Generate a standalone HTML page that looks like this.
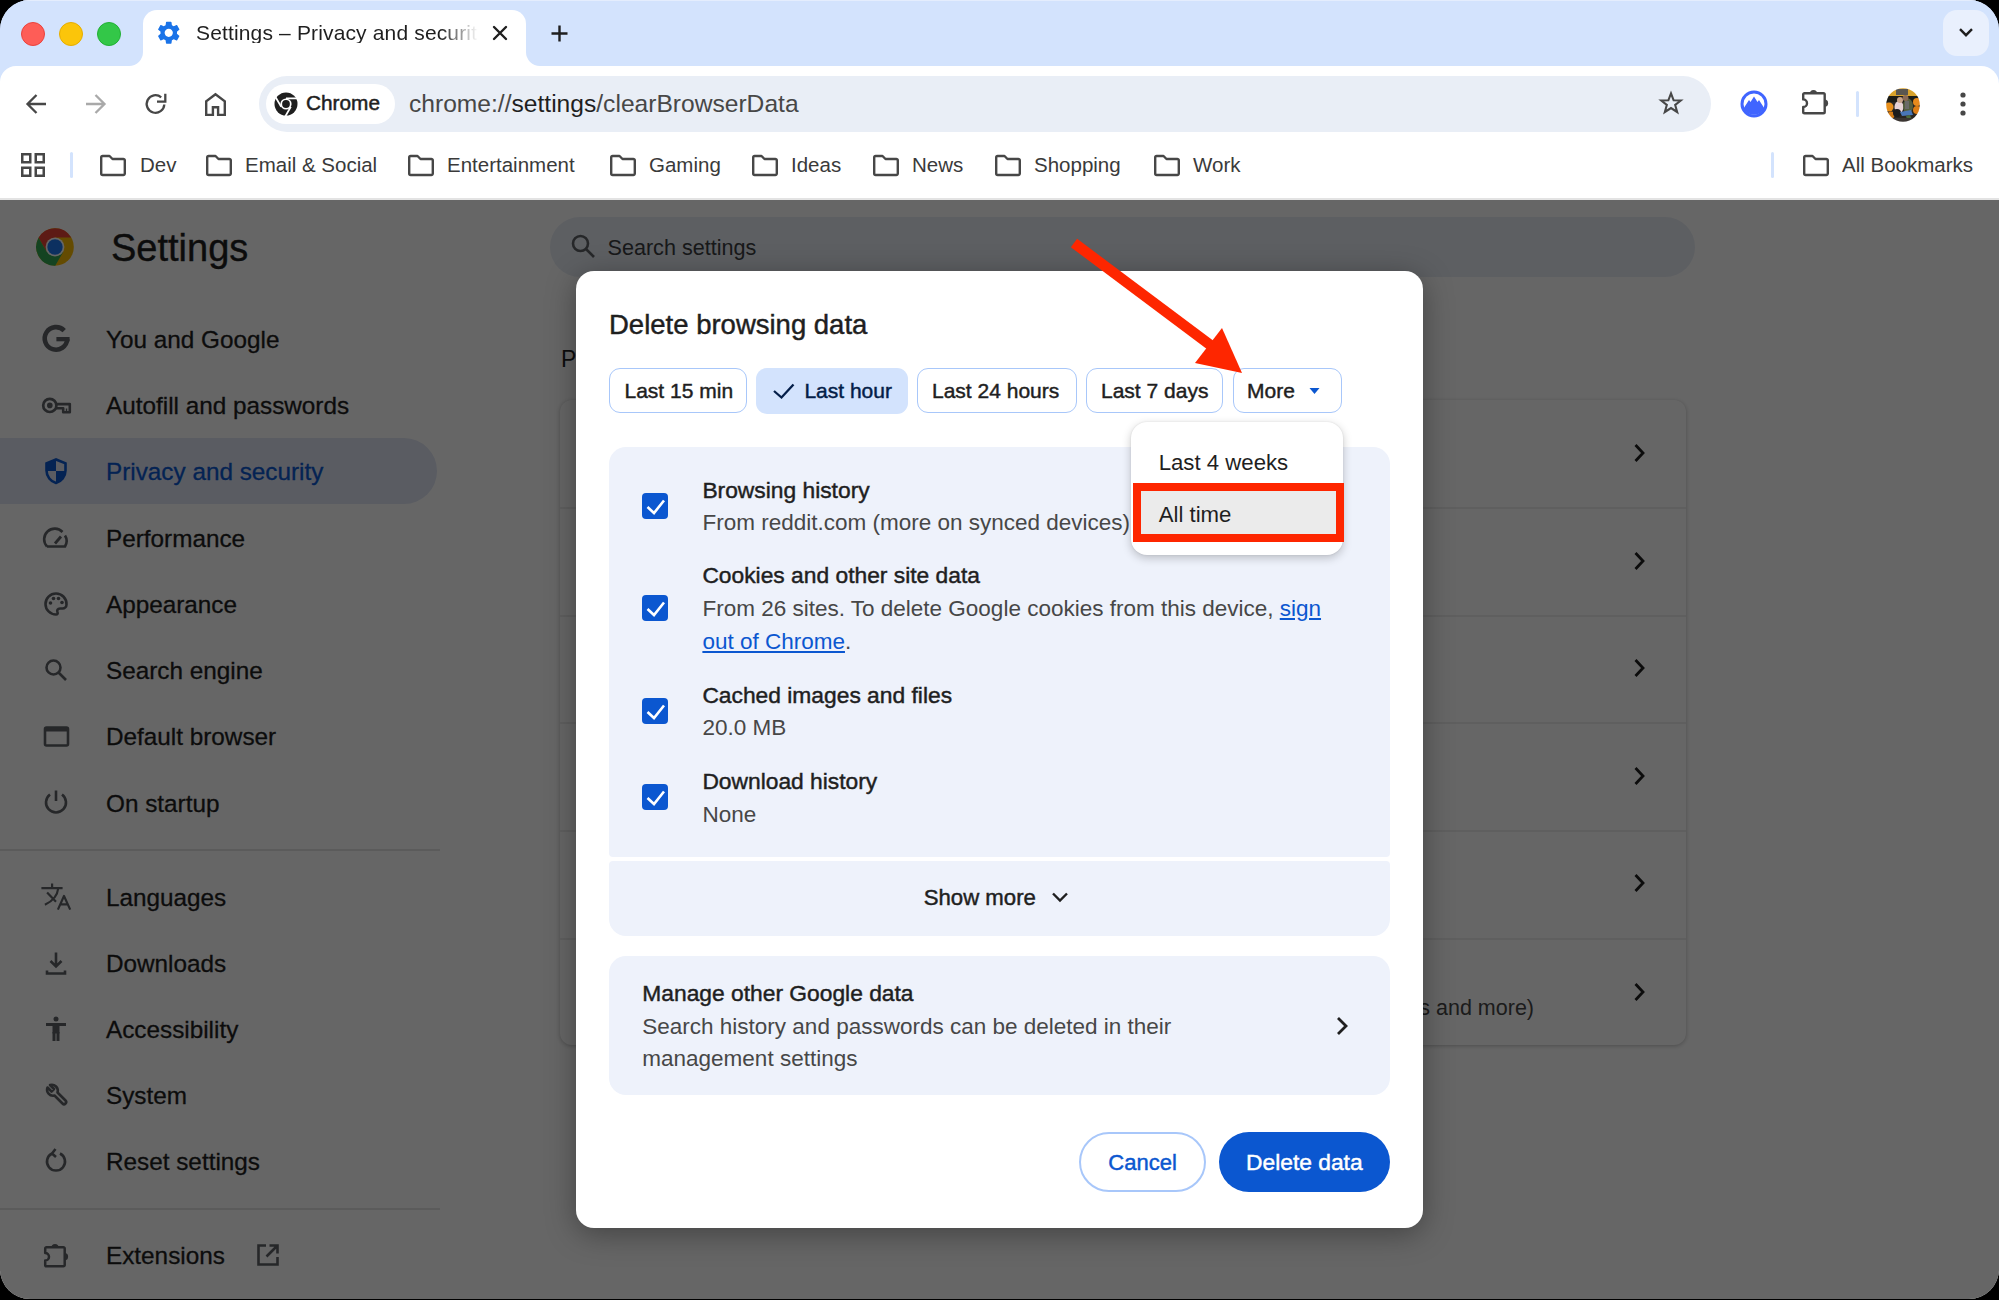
<!DOCTYPE html>
<html><head><meta charset="utf-8">
<style>
*{margin:0;padding:0;box-sizing:border-box}
html,body{width:1999px;height:1300px;overflow:hidden;background:#000}
body{font-family:"Liberation Sans",sans-serif;color:#1f1f1f}
#win{position:absolute;left:0;top:0;width:1999px;height:1299px;border-radius:30px;overflow:hidden;background:linear-gradient(#d3e3fd 0,#d3e3fd 66px,#fff 66px,#fff 200px,#666 200px)}
.a{position:absolute}
.t{position:absolute;white-space:nowrap;line-height:1}
svg{position:absolute;overflow:visible}
/* frame */
#strip{left:0;top:0;width:1999px;height:66px;background:#d3e3fd;border-top:1px solid #e4edfd}
.light{border-radius:50%;width:24px;height:24px}
#tab{left:143px;top:10px;width:383px;height:60px;background:#fff;border-radius:14px 14px 0 0}
#toolbar{left:0;top:66px;width:1999px;height:134px;background:#fff}
#omni{left:259px;top:76px;width:1452px;height:56px;border-radius:28px;background:#e9eef6}
#chip{left:266px;top:84px;width:129px;height:40px;border-radius:20px;background:#fff}
#bmline{left:0;top:198px;width:1999px;height:2px;background:#e3e3e3}
.sep{background:#d3e3fd;width:3px;border-radius:2px}
/* page */
#page{left:0;top:200px;width:1999px;height:1100px;background:#fff}
#overlay{left:0;top:200px;width:1999px;height:1100px;background:rgba(0,0,0,0.6)}
/* dialog */
#dlg{left:576px;top:271px;width:847px;height:957px;background:#fff;border-radius:18px;box-shadow:0 6px 30px rgba(0,0,0,0.35)}
.chipb{position:absolute;top:368px;height:45px;border:1.6px solid #a8c7fa;border-radius:11px;background:#fff}
.panel{position:absolute;left:609px;width:781px;background:#eef2fb}
.cb{position:absolute;left:642px;width:26px;height:26px;border-radius:4px;background:#0b57d0}
.tt{font-size:21.5px;color:#1f1f1f;-webkit-text-stroke:0.25px #1f1f1f}
.st{font-size:22px;color:#474747}
</style></head><body>
<div id="win">
  <div class="a" id="strip"></div>
  <div class="a light" style="left:21px;top:21.8px;background:#fe5d57;border:1px solid #e9423c"></div>
  <div class="a light" style="left:59px;top:21.8px;background:#fbc50a;border:1px solid #e5ad00"></div>
  <div class="a light" style="left:97px;top:21.8px;background:#33c748;border:1px solid #22b034"></div>

  <!-- active tab -->
  <div class="a" id="tab"></div>
  <div class="a" style="left:129px;top:52px;width:14px;height:14px;background:#fff"></div>
  <div class="a" style="left:129px;top:52px;width:14px;height:14px;background:#d3e3fd;border-bottom-right-radius:14px"></div>
  <div class="a" style="left:526px;top:52px;width:14px;height:14px;background:#fff"></div>
  <div class="a" style="left:526px;top:52px;width:14px;height:14px;background:#d3e3fd;border-bottom-left-radius:14px"></div>
  <!-- tab content placeholder -->
  <div id="tabc">
  <svg style="left:155px;top:19.3px" width="27.5" height="27.5" viewBox="0 0 24 24"><path fill="#1a73e8" d="M19.14 12.94c.04-.3.06-.61.06-.94 0-.32-.02-.64-.07-.94l2.03-1.58c.18-.14.23-.41.12-.61l-1.92-3.32c-.12-.22-.37-.29-.59-.22l-2.39.96c-.5-.38-1.030-.7-1.62-.94l-.36-2.54c-.04-.24-.24-.41-.48-.41h-3.84c-.24 0-.43.17-.47.41l-.36 2.54c-.59.24-1.13.57-1.62.94l-2.390-.96c-.22-.08-.47 0-.59.22L2.74 8.87c-.12.21-.08.47.12.61l2.03 1.58c-.05.3-.09.63-.09.94s.02.64.07.94l-2.03 1.58c-.18.14-.23.41-.12.61l1.92 3.32c.12.22.37.29.59.22l2.39-.96c.5.38 1.03.7 1.62.94l.36 2.54c.05.24.24.41.48.41h3.84c.24 0 .44-.17.47-.41l.36-2.54c.59-.24 1.13-.56 1.62-.94l2.39.96c.22.08.47 0 .59-.22l1.92-3.32c.12-.22.07-.47-.12-.61l-2.01-1.58zM12 15.6c-1.98 0-3.6-1.62-3.6-3.6s1.62-3.6 3.6-3.6 3.6 1.62 3.6 3.6-1.62 3.6-3.6 3.6z"/></svg>
  <div class="t" style="left:196px;top:22px;font-size:21px;letter-spacing:0.15px;color:#1f1f1f;width:285px;overflow:hidden;-webkit-mask-image:linear-gradient(90deg,#000 245px,transparent 282px)">Settings – Privacy and security</div>
  <svg style="left:493px;top:26px" width="14" height="14" viewBox="0 0 14 14"><path d="M1 1L13 13M13 1L1 13" stroke="#1f1f1f" stroke-width="2.4" stroke-linecap="round"/></svg>
  <svg style="left:551px;top:25px" width="17" height="17" viewBox="0 0 17 17"><path d="M8.5 0.5V16.5M0.5 8.5H16.5" stroke="#1f1f1f" stroke-width="2.4"/></svg>
  <div class="a" style="left:1943px;top:10px;width:46px;height:46px;border-radius:14px;background:#e9f0fd"></div>
  <svg style="left:1959px;top:28px" width="14" height="9" viewBox="0 0 14 9"><path d="M1 1.2L7 7.2L13 1.2" fill="none" stroke="#1f1f1f" stroke-width="2.4"/></svg>
</div>

  <div class="a" id="toolbar"></div>
  <div class="a" style="left:0px;top:66px;width:16px;height:16px;background:#d3e3fd"></div>
  <div class="a" style="left:0px;top:66px;width:16px;height:16px;background:#fff;border-top-left-radius:16px"></div>
  <div class="a" style="left:1975px;top:66px;width:24px;height:24px;background:#d3e3fd"></div>
  <div class="a" style="left:1975px;top:66px;width:24px;height:24px;background:#fff;border-top-right-radius:18px"></div>
  <div class="a" id="omni"></div>
  <div class="a" id="chip"></div>
  <div class="a" id="bmline"></div>

  <div id="toolc">
  <svg style="left:26px;top:94px" width="21" height="21" viewBox="0 0 21 21"><path d="M10.5 1L1.5 10L10.5 19M1.5 10H20" fill="none" stroke="#474747" stroke-width="2.3"/></svg>
  <svg style="left:85px;top:94px" width="21" height="21" viewBox="0 0 21 21"><path d="M10.5 1L19.5 10L10.5 19M19.5 10H1" fill="none" stroke="#a9a9a9" stroke-width="2.3"/></svg>
  <svg style="left:145px;top:93px" width="22" height="22" viewBox="0 0 22 22"><path d="M16.2 4.3A8.8 8.8 0 1 0 19.3 11.5" fill="none" stroke="#474747" stroke-width="2.3"/><path d="M12 8.6H20.3V0.8" fill="none" stroke="#474747" stroke-width="2.3"/></svg>
  <svg style="left:204px;top:92px" width="23" height="25" viewBox="0 0 23 25"><path d="M11.5 2.2L2.2 9.3V22.9H8.9V15.2H14.1V22.9H20.8V9.3Z" fill="none" stroke="#474747" stroke-width="2.4"/></svg>
  <svg style="left:274px;top:92px" width="24" height="24" viewBox="0 0 24 24"><circle cx="12" cy="12" r="11.5" fill="#1f1f1f"/><circle cx="12" cy="12" r="5.6" fill="#fff"/><circle cx="12" cy="12" r="3.9" fill="#1f1f1f"/><path d="M12 6.4H23M7.15 14.8L1.65 5.3M16.85 14.8L11.35 24.3" stroke="#fff" stroke-width="1.7"/></svg>
  <div class="t" style="left:306px;top:93px;font-size:20.8px;color:#1f1f1f;-webkit-text-stroke:0.5px #1f1f1f">Chrome</div>
  <div class="t" style="left:409px;top:91.5px;font-size:24.6px;color:#474747">chrome://<span style="color:#1f1f1f">settings</span>/clearBrowserData</div>
  <svg style="left:1658px;top:90.3px" width="26" height="26" viewBox="-1.3 -1.3 28.6 28.6"><path d="M13 2.5L15.9 10L23.8 10.3L17.6 15.2L19.8 22.9L13 18.5L6.2 22.9L8.4 15.2L2.2 10.3L10.1 10Z" fill="none" stroke="#474747" stroke-width="2.3" stroke-linejoin="miter"/></svg>
  <svg style="left:1740px;top:90px" width="28" height="28" viewBox="0 0 28 28"><circle cx="14" cy="14" r="12" fill="none" stroke="#4065ff" stroke-width="3"/><path d="M3.5 18.5L9 10L10.5 12L14 6.5L17.5 12L19 10L24.5 18.5A12 12 0 0 1 3.5 18.5Z" fill="#4065ff"/></svg>
  <svg style="left:1800px;top:87px" width="30" height="29" viewBox="0 0 30 29"><path d="M3.2 7.5A1.3 1.3 0 0 1 4.5 6.2H23.4A1.3 1.3 0 0 1 24.7 7.5V25A1.3 1.3 0 0 1 23.4 26.3H4.5A1.3 1.3 0 0 1 3.2 25V20A3.8 3.8 0 0 0 3.2 12.4Z" fill="none" stroke="#474747" stroke-width="2.4" stroke-linejoin="round"/><path d="M9.9 6.5A3.6 3.6 0 0 1 17.1 6.5Z" fill="#474747"/><path d="M24.5 12.6A3.6 3.6 0 0 1 24.5 19.8Z" fill="#474747"/></svg>
  <div class="a sep" style="left:1856px;top:91px;height:26px"></div>
  <svg style="left:1886px;top:87.5px" width="34" height="34" viewBox="0 0 34 34"><defs><clipPath id="av"><circle cx="17" cy="17" r="16.8"/></clipPath><filter id="avb" x="-10%" y="-10%" width="120%" height="120%"><feGaussianBlur stdDeviation="0.7"/></filter></defs><g clip-path="url(#av)"><g filter="url(#avb)"><rect width="34" height="34" fill="#2a2622"/><rect x="0" y="0" width="34" height="8" fill="#d9a22a"/><rect x="10" y="1" width="12" height="6" fill="#5a5650"/><rect x="0" y="8" width="34" height="6" fill="#1c1a18"/><circle cx="3" cy="19" r="4.5" fill="#e8901e"/><circle cx="5" cy="27" r="3.5" fill="#d07a18"/><circle cx="31" cy="14" r="4" fill="#e88a1a"/><circle cx="31" cy="22" r="4" fill="#dd7e16"/><ellipse cx="13" cy="19" rx="4.5" ry="6" fill="#e6d2d6"/><ellipse cx="11" cy="25" rx="4" ry="4" fill="#1a1a1e"/><circle cx="14" cy="12" r="3" fill="#c9a48a"/><ellipse cx="22" cy="18" rx="5" ry="7.5" fill="#56603f"/><rect x="19" y="13" width="4" height="8" fill="#6a6a68"/><circle cx="19.5" cy="10" r="3" fill="#8a6a55"/><path d="M14 24L25 22L27 27L16 28Z" fill="#4a76b8"/><path d="M20 28L24 27L27 34L22 34Z" fill="#4d6a3a"/><rect x="0" y="30" width="34" height="4" fill="#3a3630"/></g></g></svg>
  <svg style="left:1958px;top:90px" width="10" height="28" viewBox="0 0 10 28"><circle cx="5" cy="5" r="2.6" fill="#474747"/><circle cx="5" cy="14" r="2.6" fill="#474747"/><circle cx="5" cy="23" r="2.6" fill="#474747"/></svg>
</div>
  <div id="bmc">
  <svg style="left:21px;top:153px" width="25" height="25" viewBox="0 0 25 25"><g fill="none" stroke="#474747" stroke-width="2.5"><rect x="1.25" y="1.25" width="8" height="8"/><rect x="14.75" y="1.25" width="8" height="8"/><rect x="1.25" y="14.75" width="8" height="8"/><rect x="14.75" y="14.75" width="8" height="8"/></g></svg>
  <div class="a sep" style="left:70px;top:152px;height:26px"></div>
  <div class="a sep" style="left:1771px;top:152px;height:26px"></div>
  <svg style="left:99px;top:154px" width="28" height="23" viewBox="0 0 28 23"><path d="M2.2 3.5A1.5 1.5 0 0 1 3.7 2H10.5L13.5 5H24.3A1.5 1.5 0 0 1 25.8 6.5V19.5A1.5 1.5 0 0 1 24.3 21H3.7A1.5 1.5 0 0 1 2.2 19.5Z" fill="none" stroke="#474747" stroke-width="2.4" stroke-linejoin="round"/></svg>
  <div class="t" style="left:140px;top:154.5px;font-size:20.5px;color:#3a3a3a">Dev</div>
  <svg style="left:205px;top:154px" width="28" height="23" viewBox="0 0 28 23"><path d="M2.2 3.5A1.5 1.5 0 0 1 3.7 2H10.5L13.5 5H24.3A1.5 1.5 0 0 1 25.8 6.5V19.5A1.5 1.5 0 0 1 24.3 21H3.7A1.5 1.5 0 0 1 2.2 19.5Z" fill="none" stroke="#474747" stroke-width="2.4" stroke-linejoin="round"/></svg>
  <div class="t" style="left:245px;top:154.5px;font-size:20.5px;color:#3a3a3a">Email &amp; Social</div>
  <svg style="left:407px;top:154px" width="28" height="23" viewBox="0 0 28 23"><path d="M2.2 3.5A1.5 1.5 0 0 1 3.7 2H10.5L13.5 5H24.3A1.5 1.5 0 0 1 25.8 6.5V19.5A1.5 1.5 0 0 1 24.3 21H3.7A1.5 1.5 0 0 1 2.2 19.5Z" fill="none" stroke="#474747" stroke-width="2.4" stroke-linejoin="round"/></svg>
  <div class="t" style="left:447px;top:154.5px;font-size:20.5px;color:#3a3a3a">Entertainment</div>
  <svg style="left:609px;top:154px" width="28" height="23" viewBox="0 0 28 23"><path d="M2.2 3.5A1.5 1.5 0 0 1 3.7 2H10.5L13.5 5H24.3A1.5 1.5 0 0 1 25.8 6.5V19.5A1.5 1.5 0 0 1 24.3 21H3.7A1.5 1.5 0 0 1 2.2 19.5Z" fill="none" stroke="#474747" stroke-width="2.4" stroke-linejoin="round"/></svg>
  <div class="t" style="left:649px;top:154.5px;font-size:20.5px;color:#3a3a3a">Gaming</div>
  <svg style="left:751px;top:154px" width="28" height="23" viewBox="0 0 28 23"><path d="M2.2 3.5A1.5 1.5 0 0 1 3.7 2H10.5L13.5 5H24.3A1.5 1.5 0 0 1 25.8 6.5V19.5A1.5 1.5 0 0 1 24.3 21H3.7A1.5 1.5 0 0 1 2.2 19.5Z" fill="none" stroke="#474747" stroke-width="2.4" stroke-linejoin="round"/></svg>
  <div class="t" style="left:791px;top:154.5px;font-size:20.5px;color:#3a3a3a">Ideas</div>
  <svg style="left:872px;top:154px" width="28" height="23" viewBox="0 0 28 23"><path d="M2.2 3.5A1.5 1.5 0 0 1 3.7 2H10.5L13.5 5H24.3A1.5 1.5 0 0 1 25.8 6.5V19.5A1.5 1.5 0 0 1 24.3 21H3.7A1.5 1.5 0 0 1 2.2 19.5Z" fill="none" stroke="#474747" stroke-width="2.4" stroke-linejoin="round"/></svg>
  <div class="t" style="left:912px;top:154.5px;font-size:20.5px;color:#3a3a3a">News</div>
  <svg style="left:994px;top:154px" width="28" height="23" viewBox="0 0 28 23"><path d="M2.2 3.5A1.5 1.5 0 0 1 3.7 2H10.5L13.5 5H24.3A1.5 1.5 0 0 1 25.8 6.5V19.5A1.5 1.5 0 0 1 24.3 21H3.7A1.5 1.5 0 0 1 2.2 19.5Z" fill="none" stroke="#474747" stroke-width="2.4" stroke-linejoin="round"/></svg>
  <div class="t" style="left:1034px;top:154.5px;font-size:20.5px;color:#3a3a3a">Shopping</div>
  <svg style="left:1153px;top:154px" width="28" height="23" viewBox="0 0 28 23"><path d="M2.2 3.5A1.5 1.5 0 0 1 3.7 2H10.5L13.5 5H24.3A1.5 1.5 0 0 1 25.8 6.5V19.5A1.5 1.5 0 0 1 24.3 21H3.7A1.5 1.5 0 0 1 2.2 19.5Z" fill="none" stroke="#474747" stroke-width="2.4" stroke-linejoin="round"/></svg>
  <div class="t" style="left:1193px;top:154.5px;font-size:20.5px;color:#3a3a3a">Work</div>
  <svg style="left:1802px;top:154px" width="28" height="23" viewBox="0 0 28 23"><path d="M2.2 3.5A1.5 1.5 0 0 1 3.7 2H10.5L13.5 5H24.3A1.5 1.5 0 0 1 25.8 6.5V19.5A1.5 1.5 0 0 1 24.3 21H3.7A1.5 1.5 0 0 1 2.2 19.5Z" fill="none" stroke="#474747" stroke-width="2.4" stroke-linejoin="round"/></svg>
  <div class="t" style="left:1842px;top:154.5px;font-size:20.5px;color:#3a3a3a">All Bookmarks</div>
</div>

  <div class="a" id="page"></div>
  <div id="pagec">
  <svg style="left:35.6px;top:227.8px" width="38" height="38" viewBox="0 0 38 38"><circle cx="19" cy="19" r="18.8" fill="#fbbc04"/><path d="M19 19L19 9.4L35.2 9.4A18.8 18.8 0 0 0 2.59 9.77L10.69 23.8Z" fill="#e94235"/><path d="M10.69 23.8L2.59 9.77A18.8 18.8 0 0 0 19.21 37.83L27.31 23.8L19 19Z" fill="#34a853"/><circle cx="19" cy="19" r="9.4" fill="#fff"/><circle cx="19" cy="19" r="7.7" fill="#1f78f0"/></svg>
  <div class="t" style="left:111px;top:228.5px;font-size:38px;color:#1f1f1f;-webkit-text-stroke:0.4px #1f1f1f">Settings</div>
  <div class="a" style="left:550px;top:216.5px;width:1145px;height:60px;border-radius:30px;background:#e9eef6"></div>
  <svg style="left:569px;top:232px" width="28" height="28" viewBox="0 0 28 28"><circle cx="11.5" cy="11.5" r="7.5" fill="none" stroke="#5f6368" stroke-width="2.6"/><path d="M17 17L25 25" stroke="#5f6368" stroke-width="2.6"/></svg>
  <div class="t" style="left:607.5px;top:236.5px;font-size:21.6px;color:#3c3f43">Search settings</div>
  <div class="a" style="left:0;top:438px;width:437px;height:66px;border-radius:0 33px 33px 0;background:#e0e6f5"></div>
  <div class="a" style="left:0;top:849px;width:440px;height:2px;background:#e3e3e3"></div>
  <div class="a" style="left:0;top:1208px;width:440px;height:2px;background:#e3e3e3"></div>
  <svg style="left:42px;top:325px" width="28" height="28" viewBox="0 0 28 28"><path d="M22.2 5.6A11.3 11.3 0 1 0 25.3 14.2" fill="none" stroke="#5f6368" stroke-width="4.6"/><rect x="14.4" y="12" width="13.2" height="4.3" fill="#5f6368"/></svg>
  <div class="t" style="left:106px;top:327.8px;font-size:24.3px;color:#1f1f1f;-webkit-text-stroke:0.3px #1f1f1f">You and Google</div>
  <svg style="left:42px;top:391px" width="28" height="28" viewBox="0 0 28 28"><circle cx="7.8" cy="14.4" r="6.6" fill="none" stroke="#5f6368" stroke-width="2.7"/><circle cx="7.8" cy="14.4" r="2.8" fill="#5f6368"/><path d="M14.2 13.1H27.8V21.2H21.2V17.3H14.4" fill="none" stroke="#5f6368" stroke-width="2.6" stroke-linejoin="round"/><path d="M24.5 17.5V21" stroke="#5f6368" stroke-width="1.4"/></svg>
  <div class="t" style="left:106px;top:394.0px;font-size:24.3px;color:#1f1f1f;-webkit-text-stroke:0.3px #1f1f1f">Autofill and passwords</div>
  <svg style="left:42px;top:457px" width="28" height="28" viewBox="0 0 28 28"><path d="M14 2.5L4.5 6.3V13.5C4.5 19.5 8.7 24.6 14 26C19.3 24.6 23.5 19.5 23.5 13.5V6.3Z" fill="none" stroke="#0b57d0" stroke-width="2.6"/><path d="M14 2.5V14H4.5V6.3ZM14 14H23.5C23.5 19.5 19.3 24.6 14 26Z" fill="#0b57d0"/></svg>
  <div class="t" style="left:106px;top:460.3px;font-size:24.3px;color:#0b57d0;-webkit-text-stroke:0.3px #0b57d0">Privacy and security</div>
  <svg style="left:42px;top:524px" width="28" height="28" viewBox="0 0 28 28"><path d="M5 22.5A10.5 10.5 0 0 1 20.5 8M23 11.5A10.5 10.5 0 0 1 23 22.5H5" fill="none" stroke="#5f6368" stroke-width="2.6"/><path d="M13 19.5L19 12.5" stroke="#5f6368" stroke-width="2.8"/></svg>
  <div class="t" style="left:106px;top:526.5px;font-size:24.3px;color:#1f1f1f;-webkit-text-stroke:0.3px #1f1f1f">Performance</div>
  <svg style="left:42px;top:590px" width="28" height="28" viewBox="0 0 28 28"><path d="M14 3.5A10.5 10.5 0 0 0 14 24.5C15.5 24.5 16 23.5 15.5 22.3C14.8 20.5 15.5 18.5 18 18.5H20.5A4 4 0 0 0 24.5 14.5A10.5 10.5 0 0 0 14 3.5Z" fill="none" stroke="#5f6368" stroke-width="2.6"/><circle cx="8.5" cy="13" r="1.8" fill="#5f6368"/><circle cx="11.5" cy="8.5" r="1.8" fill="#5f6368"/><circle cx="16.5" cy="8.5" r="1.8" fill="#5f6368"/><circle cx="20" cy="12.5" r="1.8" fill="#5f6368"/></svg>
  <div class="t" style="left:106px;top:592.8px;font-size:24.3px;color:#1f1f1f;-webkit-text-stroke:0.3px #1f1f1f">Appearance</div>
  <svg style="left:42px;top:656px" width="28" height="28" viewBox="0 0 28 28"><circle cx="11.5" cy="11.5" r="7" fill="none" stroke="#5f6368" stroke-width="2.6"/><path d="M16.5 16.5L24 24" fill="none" stroke="#5f6368" stroke-width="2.6"/></svg>
  <div class="t" style="left:106px;top:659.0px;font-size:24.3px;color:#1f1f1f;-webkit-text-stroke:0.3px #1f1f1f">Search engine</div>
  <svg style="left:42px;top:722px" width="28" height="28" viewBox="0 0 28 28"><rect x="3" y="5.5" width="23" height="18" rx="1.5" fill="none" stroke="#5f6368" stroke-width="2.6"/><rect x="3" y="5.5" width="23" height="4" fill="#5f6368"/></svg>
  <div class="t" style="left:106px;top:725.3px;font-size:24.3px;color:#1f1f1f;-webkit-text-stroke:0.3px #1f1f1f">Default browser</div>
  <svg style="left:42px;top:788px" width="28" height="28" viewBox="0 0 28 28"><path d="M14 2.5V13" fill="none" stroke="#5f6368" stroke-width="2.6"/><path d="M8 6.5A10 10 0 1 0 20 6.5" fill="none" stroke="#5f6368" stroke-width="2.6"/></svg>
  <div class="t" style="left:106px;top:791.5px;font-size:24.3px;color:#1f1f1f;-webkit-text-stroke:0.3px #1f1f1f">On startup</div>
  <svg style="left:42px;top:883px" width="28" height="28" viewBox="0 0 28 28"><path d="M-0.6 5.1H20.6M10.1 0.5V5.1M16.2 5.5C15.5 12 11 18 2.9 21.7M5.1 9.4L14 18.8" fill="none" stroke="#5f6368" stroke-width="2.2"/><path d="M15.9 26.6L22 13L28.2 26.6M18 21.3H26" fill="none" stroke="#5f6368" stroke-width="2.2" stroke-linejoin="round"/></svg>
  <div class="t" style="left:106px;top:885.6px;font-size:24.3px;color:#1f1f1f;-webkit-text-stroke:0.3px #1f1f1f">Languages</div>
  <svg style="left:42px;top:949px" width="28" height="28" viewBox="0 0 28 28"><path d="M14 3.5V17M8.5 12L14 17.5L19.5 12M5 21.5V24.5H23V21.5" fill="none" stroke="#5f6368" stroke-width="2.6"/></svg>
  <div class="t" style="left:106px;top:951.7px;font-size:24.3px;color:#1f1f1f;-webkit-text-stroke:0.3px #1f1f1f">Downloads</div>
  <svg style="left:42px;top:1015px" width="28" height="28" viewBox="0 0 28 28"><circle cx="14" cy="4" r="2.5" fill="#5f6368"/><path d="M4 9.5H24" stroke="#5f6368" stroke-width="3"/><rect x="10.5" y="9.5" width="7" height="9" fill="#5f6368"/><path d="M12 17V26M16 17V26" stroke="#5f6368" stroke-width="3"/></svg>
  <div class="t" style="left:106px;top:1018.0px;font-size:24.3px;color:#1f1f1f;-webkit-text-stroke:0.3px #1f1f1f">Accessibility</div>
  <svg style="left:42px;top:1081px" width="28" height="28" viewBox="0 0 28 28"><path d="M5.5 6.5L9.5 10.5L12 8L8 4A6 6 0 0 1 15.5 11.5L23.5 19.5A2 2 0 0 1 20.5 22.5L12.5 14.5A6 6 0 0 1 5.5 6.5Z" fill="none" stroke="#5f6368" stroke-width="2.6" stroke-linejoin="round"/></svg>
  <div class="t" style="left:106px;top:1084.0px;font-size:24.3px;color:#1f1f1f;-webkit-text-stroke:0.3px #1f1f1f">System</div>
  <svg style="left:42px;top:1147px" width="28" height="28" viewBox="0 0 28 28"><path d="M10 6.5A9 9 0 1 0 18 6.5" fill="none" stroke="#5f6368" stroke-width="2.6"/><path d="M13.5 2L10 6.5L14 10" fill="none" stroke="#5f6368" stroke-width="2.6"/></svg>
  <div class="t" style="left:106px;top:1150.3px;font-size:24.3px;color:#1f1f1f;-webkit-text-stroke:0.3px #1f1f1f">Reset settings</div>
  <svg style="left:42px;top:1241px" width="28" height="28" viewBox="0 0 28 28"><path d="M3.2 7.5A1.3 1.3 0 0 1 4.5 6.2H21.4A1.3 1.3 0 0 1 22.7 7.5V24A1.3 1.3 0 0 1 21.4 25.3H4.5A1.3 1.3 0 0 1 3.2 24V19.5A3.8 3.8 0 0 0 3.2 11.9Z" fill="none" stroke="#5f6368" stroke-width="2.5" stroke-linejoin="round"/><path d="M9.4 6.5A3.6 3.6 0 0 1 16.6 6.5Z" fill="#5f6368"/><path d="M22.5 12.1A3.6 3.6 0 0 1 22.5 19.3Z" fill="#5f6368"/></svg>
  <div class="t" style="left:106px;top:1244.0px;font-size:24.3px;color:#1f1f1f;-webkit-text-stroke:0.3px #1f1f1f">Extensions</div>
  <svg style="left:255px;top:1242px" width="26" height="26" viewBox="0 0 26 26"><path d="M11 3.5H3.5V22.5H22.5V15M14.5 3.5H22.5V11.5M22.5 3.5L11.5 14.5" fill="none" stroke="#5f6368" stroke-width="2.6"/></svg>
  <div class="t" style="left:561px;top:347.5px;font-size:23px;color:#1f1f1f">Privacy and security</div>
  <div class="a" style="left:560px;top:400px;width:1126px;height:645px;border-radius:12px;background:#fff;box-shadow:0 1px 4px rgba(0,0,0,0.25)"></div>
  <div class="a" style="left:560px;top:507px;width:1126px;height:1.5px;background:#ededed"></div>
  <div class="a" style="left:560px;top:615px;width:1126px;height:1.5px;background:#ededed"></div>
  <div class="a" style="left:560px;top:722px;width:1126px;height:1.5px;background:#ededed"></div>
  <div class="a" style="left:560px;top:830px;width:1126px;height:1.5px;background:#ededed"></div>
  <div class="a" style="left:560px;top:938px;width:1126px;height:1.5px;background:#ededed"></div>
  <svg style="left:1632px;top:443px" width="16" height="20" viewBox="0 0 16 20"><path d="M3.5 2L11 10L3.5 18" fill="none" stroke="#1f1f1f" stroke-width="2.8"/></svg>
  <svg style="left:1632px;top:551px" width="16" height="20" viewBox="0 0 16 20"><path d="M3.5 2L11 10L3.5 18" fill="none" stroke="#1f1f1f" stroke-width="2.8"/></svg>
  <svg style="left:1632px;top:658px" width="16" height="20" viewBox="0 0 16 20"><path d="M3.5 2L11 10L3.5 18" fill="none" stroke="#1f1f1f" stroke-width="2.8"/></svg>
  <svg style="left:1632px;top:766px" width="16" height="20" viewBox="0 0 16 20"><path d="M3.5 2L11 10L3.5 18" fill="none" stroke="#1f1f1f" stroke-width="2.8"/></svg>
  <svg style="left:1632px;top:873px" width="16" height="20" viewBox="0 0 16 20"><path d="M3.5 2L11 10L3.5 18" fill="none" stroke="#1f1f1f" stroke-width="2.8"/></svg>
  <svg style="left:1632px;top:982px" width="16" height="20" viewBox="0 0 16 20"><path d="M3.5 2L11 10L3.5 18" fill="none" stroke="#1f1f1f" stroke-width="2.8"/></svg>
  <div class="t" style="left:1200px;top:998px;width:334px;text-align:right;font-size:21.5px;color:#474747">Third-party cookies and more)</div>
</div>
  <div class="a" id="overlay"></div>

  <div class="a" id="dlg"></div>
  <div id="dlgc">
  <div class="t" style="left:609px;top:310.9px;font-size:27.5px;color:#1f1f1f;-webkit-text-stroke:0.45px currentColor;">Delete browsing data</div>
  <div class="chipb" style="left:609px;width:137.5px"></div>
  <div class="t" style="left:624.5px;top:379.8px;font-size:21px;color:#1f1f1f;-webkit-text-stroke:0.45px currentColor;">Last 15 min</div>
  <div class="chipb" style="left:917px;width:159.5px"></div>
  <div class="t" style="left:932px;top:379.8px;font-size:21px;color:#1f1f1f;-webkit-text-stroke:0.45px currentColor;">Last 24 hours</div>
  <div class="chipb" style="left:1086px;width:137px"></div>
  <div class="t" style="left:1101px;top:379.8px;font-size:21px;color:#1f1f1f;-webkit-text-stroke:0.45px currentColor;">Last 7 days</div>
  <div class="chipb" style="left:1232.5px;width:109.5px"></div>
  <div class="t" style="left:1247px;top:379.8px;font-size:21px;color:#1f1f1f;-webkit-text-stroke:0.45px currentColor;">More</div>
  <div class="a" style="left:755.5px;top:367.5px;width:152.5px;height:46px;border-radius:11px;background:#d3e3fd"></div>
  <svg style="left:770px;top:380px" width="26" height="20" viewBox="0 0 26 20"><path d="M4 11L11.5 17.5L23.5 4.5" fill="none" stroke="#041e49" stroke-width="2.3"/></svg>
  <div class="t" style="left:804.4px;top:379.8px;font-size:21px;color:#041e49;-webkit-text-stroke:0.45px currentColor;">Last hour</div>
  <svg style="left:1308px;top:386px" width="13" height="9" viewBox="0 0 13 9"><path d="M1.5 2H11.5L6.5 8Z" fill="#0b57d0"/></svg>
  <div class="panel" style="top:447px;height:410px;border-radius:17px 17px 4px 4px"></div>
  <div class="panel" style="top:861px;height:75px;border-radius:4px 4px 17px 17px"></div>
  <div class="panel" style="top:956px;height:139px;border-radius:17px"></div>
  <div class="cb" style="top:492.9px"></div>
  <svg style="left:642px;top:493px" width="27" height="27" viewBox="0 0 27 27"><path d="M5.5 14L12 20L22 7.5" fill="none" stroke="#fff" stroke-width="2.6"/></svg>
  <div class="cb" style="top:595.4px"></div>
  <svg style="left:642px;top:595px" width="27" height="27" viewBox="0 0 27 27"><path d="M5.5 14L12 20L22 7.5" fill="none" stroke="#fff" stroke-width="2.6"/></svg>
  <div class="cb" style="top:698.2px"></div>
  <svg style="left:642px;top:698px" width="27" height="27" viewBox="0 0 27 27"><path d="M5.5 14L12 20L22 7.5" fill="none" stroke="#fff" stroke-width="2.6"/></svg>
  <div class="cb" style="top:784.4px"></div>
  <svg style="left:642px;top:784px" width="27" height="27" viewBox="0 0 27 27"><path d="M5.5 14L12 20L22 7.5" fill="none" stroke="#fff" stroke-width="2.6"/></svg>
  <div class="t" style="left:702.4px;top:478.7px;font-size:22.8px;color:#1f1f1f;-webkit-text-stroke:0.45px currentColor;">Browsing history</div>
  <div class="t" style="left:702.4px;top:512.0px;font-size:22.5px;color:#474747;">From reddit.com (more on synced devices)</div>
  <div class="t" style="left:702.4px;top:564.3px;font-size:22.8px;color:#1f1f1f;-webkit-text-stroke:0.45px currentColor;">Cookies and other site data</div>
  <div class="t" style="left:702.4px;top:598.0px;font-size:22.5px;color:#474747;">From 26 sites. To delete Google cookies from this device, <span style="color:#0b57d0;text-decoration:underline">sign</span></div>
  <div class="t" style="left:702.4px;top:631.0px;font-size:22.5px;color:#474747;"><span style="color:#0b57d0;text-decoration:underline">out of Chrome</span>.</div>
  <div class="t" style="left:702.4px;top:684.2px;font-size:22.8px;color:#1f1f1f;-webkit-text-stroke:0.45px currentColor;">Cached images and files</div>
  <div class="t" style="left:702.4px;top:717.3px;font-size:22.5px;color:#474747;">20.0 MB</div>
  <div class="t" style="left:702.4px;top:770.2px;font-size:22.8px;color:#1f1f1f;-webkit-text-stroke:0.45px currentColor;">Download history</div>
  <div class="t" style="left:702.4px;top:804.0px;font-size:22.5px;color:#474747;">None</div>
  <div class="t" style="left:923.7px;top:886.7px;font-size:22.2px;color:#1f1f1f;-webkit-text-stroke:0.45px currentColor;">Show more</div>
  <svg style="left:1050px;top:890px" width="20" height="14" viewBox="0 0 20 14"><path d="M3 3.5L10 10.5L17 3.5" fill="none" stroke="#1f1f1f" stroke-width="2.4"/></svg>
  <div class="t" style="left:642.3px;top:982.1px;font-size:22.8px;color:#1f1f1f;-webkit-text-stroke:0.45px currentColor;">Manage other Google data</div>
  <div class="t" style="left:642.3px;top:1015.6px;font-size:22.5px;color:#474747;">Search history and passwords can be deleted in their</div>
  <div class="t" style="left:642.3px;top:1047.6px;font-size:22.5px;color:#474747;">management settings</div>
  <svg style="left:1334px;top:1016px" width="16" height="20" viewBox="0 0 16 20"><path d="M4 2L12 10L4 18" fill="none" stroke="#1f1f1f" stroke-width="2.8"/></svg>
  <div class="a" style="left:1079px;top:1131.5px;width:127px;height:60px;border-radius:30px;border:2px solid #a8c7fa;background:#fff"></div>
  <div class="t" style="left:1108.3px;top:1151.7px;font-size:22px;color:#0b57d0;-webkit-text-stroke:0.45px currentColor;">Cancel</div>
  <div class="a" style="left:1219px;top:1131.5px;width:171px;height:60px;border-radius:30px;background:#0b57d0"></div>
  <div class="t" style="left:1246px;top:1151.0px;font-size:22.8px;color:#fff;-webkit-text-stroke:0.45px currentColor;">Delete data</div>
  <div class="a" style="left:1131px;top:422px;width:212px;height:133px;border-radius:16px;background:#fff;box-shadow:0 3px 10px rgba(0,0,0,0.22),0 0 2px rgba(0,0,0,0.1)"></div>
  <div class="a" style="left:1132.5px;top:483px;width:211px;height:59px;background:#ebebeb;border:8.5px solid #fe2600"></div>
  <div class="t" style="left:1158.7px;top:452.2px;font-size:22.2px;color:#1f1f1f;">Last 4 weeks</div>
  <div class="t" style="left:1158.7px;top:504.3px;font-size:22.2px;color:#1f1f1f;">All time</div>
  <svg style="left:1060px;top:230px" width="200" height="160" viewBox="0 0 200 160"><path d="M14 13L163 124.5" stroke="#fe2600" stroke-width="10.5"/><path d="M182 143L135 133L162 98Z" fill="#fe2600"/></svg>
</div>
</div>
</body></html>
